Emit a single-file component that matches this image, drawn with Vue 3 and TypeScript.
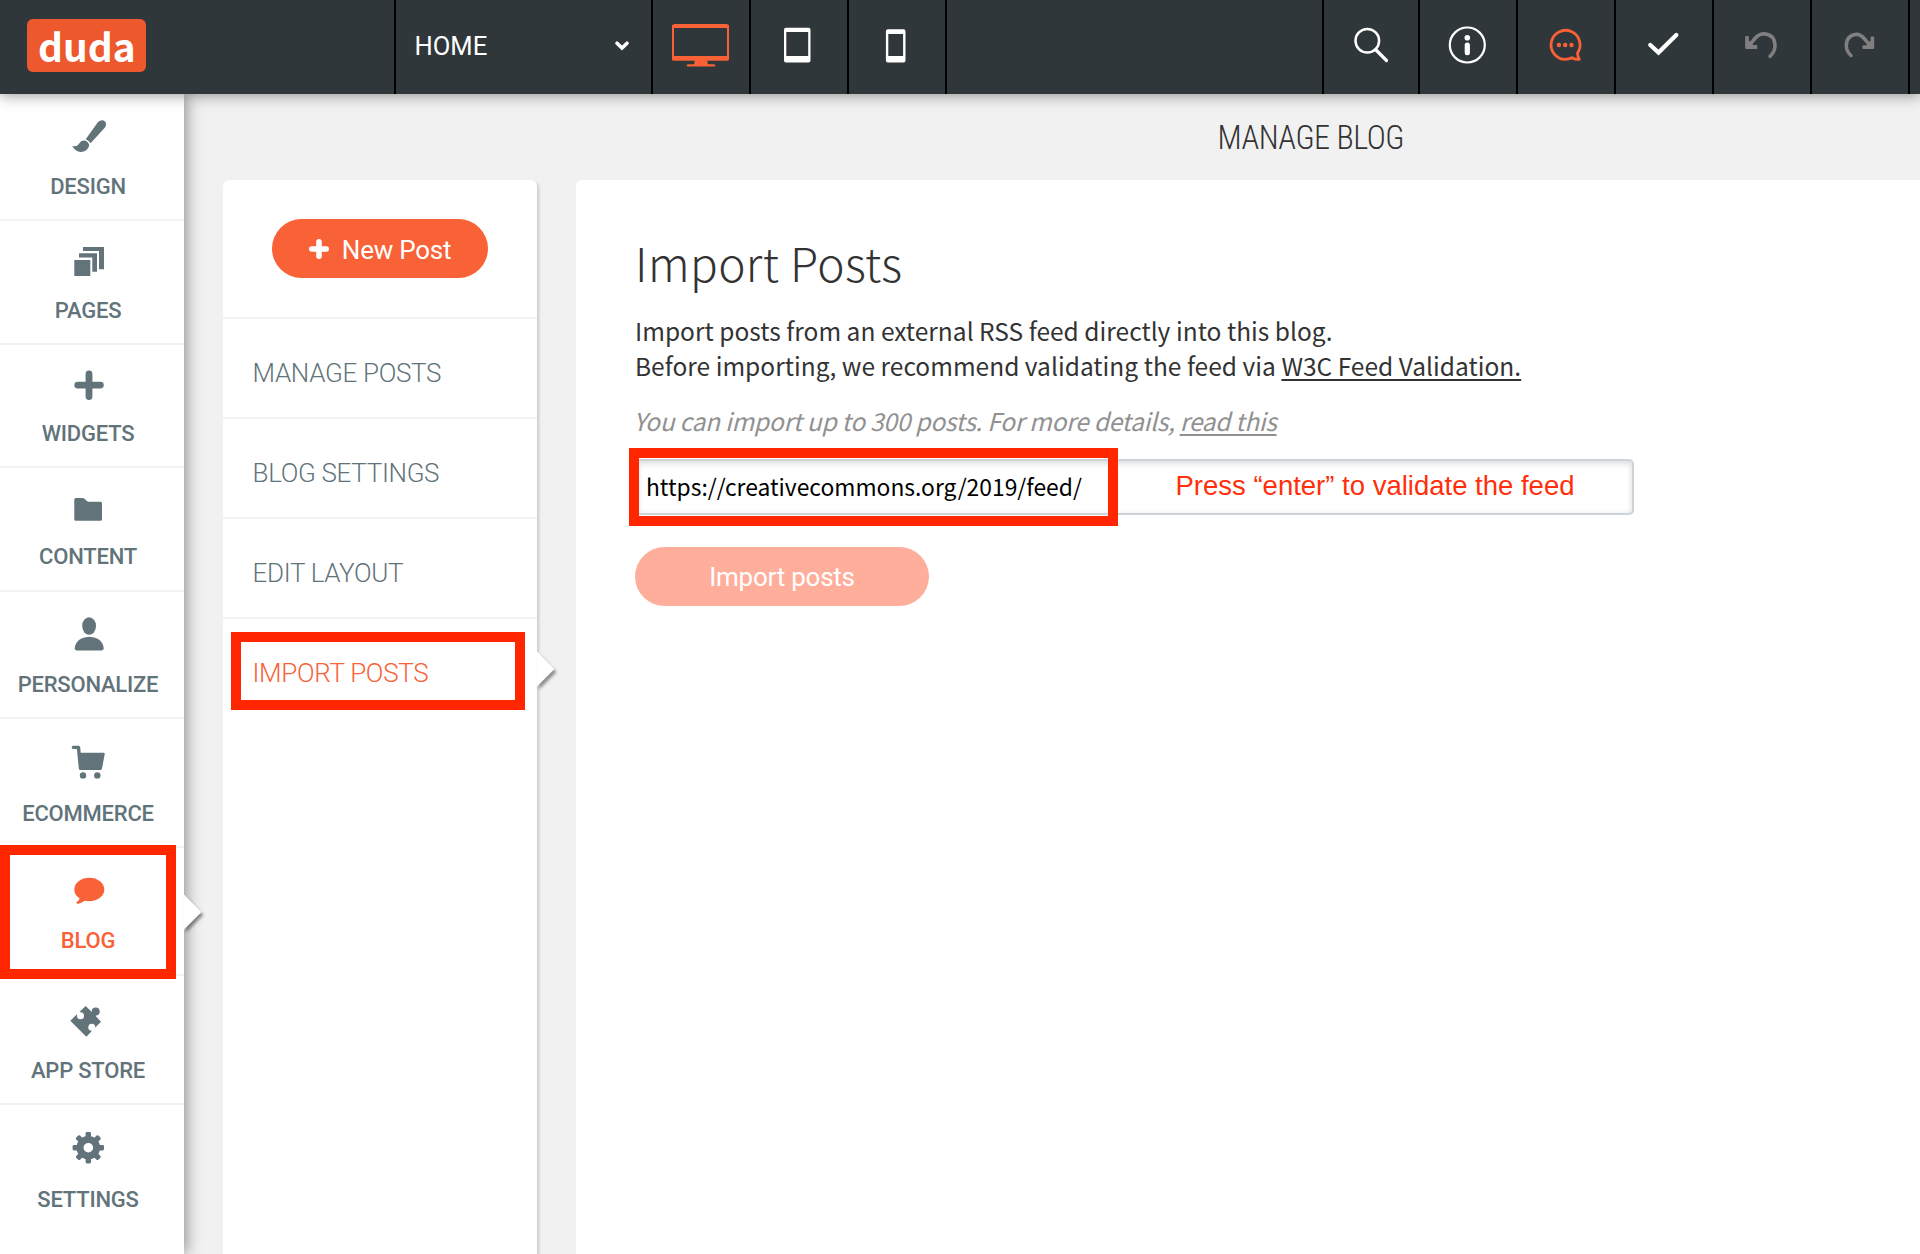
<script setup lang="ts">
import { ref } from 'vue'

interface NavItem {
  id: string
  label: string
  height: number
}

const navItems: NavItem[] = [
  { id: 'design', label: 'DESIGN', height: 127 },
  { id: 'pages', label: 'PAGES', height: 124 },
  { id: 'widgets', label: 'WIDGETS', height: 123 },
  { id: 'content', label: 'CONTENT', height: 124 },
  { id: 'personalize', label: 'PERSONALIZE', height: 127 },
  { id: 'ecommerce', label: 'ECOMMERCE', height: 129 },
  { id: 'blog', label: 'BLOG', height: 128 },
  { id: 'appstore', label: 'APP STORE', height: 129 },
  { id: 'settings', label: 'SETTINGS', height: 129 },
]

const blogMenu = ['MANAGE POSTS', 'BLOG SETTINGS', 'EDIT LAYOUT', 'IMPORT POSTS']
const gearTeeth = [0, 45, 90, 135, 180, 225, 270, 315]

const activeNav = ref('blog')
const activeMenu = ref('IMPORT POSTS')
const feedUrl = ref('https://creativecommons.org/2019/feed/')
</script>

<template>
  <div class="app">
    <header class="topbar">
      <div class="brand"><div class="logo"><span>duda</span></div></div>
      <div class="cell page-select">
        <span>HOME</span>
        <svg width="18" height="14" viewBox="0 0 18 14"><path d="M4 4.2l5 4.8 5-4.8" fill="none" stroke="#fff" stroke-width="3.6" stroke-linecap="round" /></svg>
      </div>
      <div class="cell device">
        <svg viewBox="0 0 96 94">
          <rect x="20" y="25" width="55" height="34.6" rx="2" fill="none" stroke="#f96137" stroke-width="2" />
          <path d="M19 25h57v3H19zM19 56h57v3.500q0 1-1 1H20q-1 0-1-1zM41.500 60h13v3q0 1.200 1.200 1.200H61q1.300 0 1.300 1.200T61 66.600H35q-1.300 0-1.300-1.200T35 64.200h5.300q1.200 0 1.200-1.200z" fill="#f96137" />
        </svg>
      </div>
      <div class="cell device">
        <svg viewBox="0 0 96 94"><path fill-rule="evenodd" d="M35 27.700h22.500q2 0 2 2V60.500q0 2-2 2H35q-2 0-2-2V29.700q0-2 2-2zM35.300 32v24H57.200V32z" fill="#fff" /></svg>
      </div>
      <div class="cell device">
        <svg viewBox="0 0 96 94"><path fill-rule="evenodd" d="M38.900 29.300H54.500q2 0 2 2V60.500q0 2-2 2H38.900q-2 0-2-2V31.300q0-2 2-2zM39.300 34v22H54.100V34z" fill="#fff" /></svg>
      </div>
      <div class="cell spacer"></div>
      <div class="cell tool first">
        <svg viewBox="0 0 96 94"><g fill="none" stroke="#fff"><circle cx="43.300" cy="40.700" r="11.800" stroke-width="2.500" /><path d="M51.500 49.500L62.500 60.500" stroke-width="3.200" stroke-linecap="round" /></g></svg>
      </div>
      <div class="cell tool">
        <svg viewBox="0 0 96 94"><circle cx="47.300" cy="45" r="17.500" fill="none" stroke="#fff" stroke-width="2.200" /><circle cx="47.300" cy="37.700" r="2.800" fill="#fff" /><rect x="44.700" y="42.500" width="5.200" height="12.800" rx="2.500" fill="#fff" /></svg>
      </div>
      <div class="cell tool">
        <svg viewBox="0 0 96 94">
          <path d="M59.500 53A14.500 14.500 0 1 0 47.200 59.300Q50.500 59.300 54 57.700Q57.500 59.800 61.300 59.400Q59.700 57 59.500 53z" fill="none" stroke="#f96137" stroke-width="2.800" stroke-linejoin="round" />
          <g fill="#f96137"><circle cx="40.900" cy="45" r="2.200" /><circle cx="47.200" cy="45" r="2.200" /><circle cx="53.500" cy="45" r="2.200" /></g>
        </svg>
      </div>
      <div class="cell tool">
        <svg viewBox="0 0 96 94"><path d="M34.300 45L42.500 52.500L60.300 35" fill="none" stroke="#fff" stroke-width="4.300" stroke-linecap="round" stroke-linejoin="miter" /></svg>
      </div>
      <div class="cell tool">
        <svg viewBox="0 0 96 94">
          <path d="M36 44.500L41.500 37.800Q45.500 33.800 50 33.800Q61 34.800 61 46Q60.800 52 56 56.300" fill="none" stroke="#808080" stroke-width="3.500" stroke-linecap="round" />
          <path d="M32.200 36h1.600q1 0 1 1v3.500l4.500 4.500h3q1 0 1 1v2q0 1-1 1H32.200q-1 0-1-1V37q0-1 1-1z" fill="#808080" />
        </svg>
      </div>
      <div class="cell tool">
        <svg viewBox="0 0 96 94">
          <path d="M57 44L51.500 37.800Q48 34.200 44.500 34.200Q34.300 35.200 34.300 46Q34.500 51.500 39 55.500" fill="none" stroke="#808080" stroke-width="3.500" stroke-linecap="round" />
          <path d="M61.200 36.500h-1.600q-1 0-1 1v3.300l-4.500 4.400h-2.700q-1 0-1 1v1.900q0 1 1 1h9.800q1 0 1-1V37.500q0-1-1-1z" fill="#808080" />
        </svg>
      </div>
      <div class="cell tail"></div>
    </header>

    <div class="body">
      <nav class="sidebar">
        <div
          v-for="item in navItems"
          :key="item.id"
          class="nav-item"
          :class="['nav-' + item.id, { active: item.id === activeNav }]"
          :style="{ height: item.height + 'px' }"
        >
          <svg class="nav-icon" width="40" height="40" viewBox="0 0 40 40" fill="currentColor">
            <g v-if="item.id === 'design'">
              <path d="M30 6Q34 2.800 37 5.500Q39.200 8 37 11.500L22.500 27.300Q20.500 24.500 17.700 23.300z" />
              <path d="M4.200 30Q9 31.200 11 27.800Q13 24 17 24.500Q21.300 26.300 21.200 29.800Q19.500 35.500 12.700 36Q7 35.500 4.200 30z" />
            </g>
            <path v-else-if="item.id === 'pages'" d="M6.300 20h16v16h-16zM11 13.300h18v18.400h-4.700V17.400H11zM15 7h21v22.300h-5V11H15z" />
            <path v-else-if="item.id === 'widgets'" d="M21 10.800v22.700M9.700 22.100h22.700" stroke="currentColor" stroke-width="6.800" stroke-linecap="round" />
            <path v-else-if="item.id === 'content'" d="M7.800 12h6.600q1.200 0 2.300 1l1.800 1.700q1 1 2.200 1h11.800q1.500 0 1.500 1.500V33.200q0 1.500-1.500 1.500H7.800q-1.500 0-1.500-1.500V13.500q0-1.500 1.500-1.500z" />
            <g v-else-if="item.id === 'personalize'">
              <ellipse cx="21.100" cy="12" rx="6.900" ry="8.700" />
              <path d="M6.700 34.300Q8 23.700 21.200 22.800Q34.500 23.700 35.700 34.300Q35.700 36.400 33.700 36.400H8.700Q6.700 36.400 6.700 34.300z" />
            </g>
            <g v-else-if="item.id === 'ecommerce'">
              <path d="M5.200 2.700H10.500Q12 2.700 12.200 4.200L12.700 9.700H35.500Q37 9.700 36.700 11.200L34 25.500Q33.700 27 32.200 27H12.500Q11 27 10.800 25.500L8.900 6H5.200Q3.700 6 3.700 4.300T5.200 2.700z" />
              <circle cx="15" cy="32.400" r="3.200" /><circle cx="29.300" cy="32.400" r="3.200" />
            </g>
            <g v-else-if="item.id === 'blog'">
              <ellipse cx="21.300" cy="19.500" rx="15" ry="11.800" />
              <path d="M12 27.500Q11.500 30.500 8.300 32.500Q8.300 34 10.500 33.700Q15 32.800 18 29.500z" />
            </g>
            <g v-else-if="item.id === 'appstore'">
              <path d="M17.700 6L24 12.300L30 18.500L33 21.800L18.300 36.700L2.300 20.700z" />
              <circle cx="27.700" cy="11.600" r="4" /><path d="M22.500 14.500L26 11L29 14L26.500 18z" />
              <g fill="#fff"><circle cx="12.500" cy="15.800" r="3.500" /><path d="M8.500 13.500L10.800 11.200L14 14L11 17z" /><circle cx="23.800" cy="27.300" r="3.500" /><path d="M23.500 31L27 27.500L29 29L25 33z" /></g>
            </g>
            <g v-else>
              <circle cx="20.300" cy="18.700" r="8.300" fill="none" stroke="currentColor" stroke-width="7" />
              <rect v-for="angle in gearTeeth" :key="angle" x="17.600" y="3" width="5.400" height="6" rx="1.300" :transform="`rotate(${angle} 20.300 18.700)`" />
            </g>
          </svg>
          <span class="nav-label">{{ item.label }}</span>
          <svg v-if="item.id === activeNav" class="pointer" width="24" height="46" viewBox="0 0 24 46"><path d="M-2 3.500L0 5.500L17.500 23L0 40.500L-2 42.500z" fill="#fff" /></svg>
          <div v-if="item.id === activeNav" class="highlight nav-highlight"></div>
        </div>
      </nav>

      <main class="workspace">
        <h1 class="page-title">MANAGE BLOG</h1>
        <div class="panels">
          <aside class="menu">
            <div class="menu-top">
              <button class="btn new-post">
                <svg width="20" height="20" viewBox="0 0 20 20"><path d="M10 2.800v14.400M2.800 10h14.400" stroke="#fff" stroke-width="5.600" stroke-linecap="round" /></svg>
                <span>New Post</span>
              </button>
            </div>
            <div v-for="entry in blogMenu" :key="entry" class="menu-item" :class="{ active: entry === activeMenu }">
              {{ entry }}
              <svg v-if="entry === activeMenu" class="pointer" width="24" height="46" viewBox="0 0 24 46"><path d="M-2 3.500L0 5.500L17.500 23L0 40.500L-2 42.500z" fill="#fff" /></svg>
              <div v-if="entry === activeMenu" class="highlight menu-highlight"></div>
            </div>
          </aside>

          <section class="panel">
            <h2>Import Posts</h2>
            <p class="intro">Import posts from an external RSS feed directly into this blog.<br />Before importing, we recommend validating the feed via <a>W3C Feed Validation.</a></p>
            <p class="note">You can import up to 300 posts. For more details, <a>read this</a></p>
            <div class="field">
              <span class="url">{{ feedUrl }}</span>
              <span class="hint">Press “enter” to validate the feed</span>
              <div class="highlight field-highlight"></div>
            </div>
            <button class="btn import">Import posts</button>
          </section>
        </div>
      </main>
    </div>
  </div>
</template>

<style>
body {
  margin: 0;
  overflow: hidden;
}
</style>

<style scoped>
.app {
  width: 1920px;
  height: 1254px;
  display: flex;
  flex-direction: column;
  overflow: hidden;
  background: #f1f1f1;
  font-family: Roboto, sans-serif;
}
.app * {
  box-sizing: border-box;
}

/* Top bar */
.topbar {
  position: relative;
  z-index: 3;
  flex: none;
  display: flex;
  height: 94px;
  background: #30373a;
  box-shadow: 0 2px 13px rgba(0, 0, 0, 0.38);
}
.brand {
  width: 394px;
  padding: 19px 0 0 26.500px;
}
.logo {
  width: 119.500px;
  height: 53px;
  border-radius: 6px;
  background: #ed592c;
  color: #fff;
  font: 700 38.800px/53px 'Noto Sans CJK SC', sans-serif;
  padding-left: 11.500px;
}
.cell {
  height: 94px;
  border-left: 2px solid #000;
}
.cell > svg {
  display: block;
}
.page-select {
  width: 257px;
  display: flex;
  align-items: center;
  justify-content: space-between;
  padding: 0 20px 2px 18.500px;
  color: #fff;
  font-size: 25.600px;
}
.device,
.tool {
  width: 98px;
}
.device > svg,
.tool > svg {
  width: 96px;
  height: 94px;
}
.tool.first {
  width: 96px;
  overflow: hidden;
}
.spacer {
  width: 377px;
}
.tail {
  flex: 1;
}

.body {
  flex: 1;
  display: flex;
  min-height: 0;
}

/* Sidebar */
.sidebar {
  position: relative;
  z-index: 2;
  flex: none;
  width: 184px;
  background: #fff;
  box-shadow: 2px 0 15px rgba(0, 0, 0, 0.42);
}
.nav-item {
  position: relative;
  display: flex;
  flex-direction: column;
  align-items: center;
  justify-content: flex-end;
  padding: 0 8px 19px 0;
  border-bottom: 2px solid #f1f2f3;
  color: #62737a;
}
.nav-item.nav-content,
.nav-item.nav-blog {
  padding-bottom: 20px;
}
.nav-item.active {
  color: #f96137;
}
.nav-item.nav-settings {
  border-bottom: 0;
  padding-bottom: 21px;
}
.nav-icon {
  margin-bottom: 18px;
}
.nav-label {
  font-size: 22px;
  line-height: 26px;
  font-weight: 500;
  letter-spacing: -0.22px;
}
.pointer {
  position: absolute;
  left: 100%;
  filter: drop-shadow(2px 3px 1.500px rgba(0, 0, 0, 0.42));
}
.nav-item .pointer {
  top: 40.500px;
}
.highlight {
  position: absolute;
  border: 10px solid #ff2600;
}
.nav-highlight {
  left: 0;
  top: -3.500px;
  width: 176px;
  height: 134px;
}

/* Workspace */
.workspace {
  flex: 1;
  display: flex;
  flex-direction: column;
  min-width: 0;
}
.page-title {
  margin: 0;
  height: 86px;
  padding: 1px 0 0 1033.500px;
  font: 300 32.300px/86px 'Roboto Condensed', Roboto, sans-serif;
  letter-spacing: -0.500px;
  color: #333;
}
.panels {
  flex: 1;
  display: flex;
  gap: 39px;
  padding-left: 39px;
}
.menu {
  width: 314px;
  background: #fff;
  border-radius: 6px 6px 0 0;
  box-shadow: 2px 2px 3px rgba(0, 0, 0, 0.16);
}
.menu-top {
  height: 139px;
  padding: 39px 0 0 49px;
  border-bottom: 2px solid #f1f2f3;
}
.btn {
  display: flex;
  align-items: center;
  justify-content: center;
  height: 59px;
  padding: 0;
  border: 0;
  border-radius: 30px;
  color: #fff;
  font-family: Roboto, sans-serif;
  font-size: 26px;
}
.new-post {
  width: 216px;
  gap: 13px;
  background: #f96137;
  letter-spacing: -0.250px;
}
.new-post span {
  padding-top: 2px;
}
.menu-item {
  position: relative;
  height: 100px;
  padding: 10px 0 0 29.500px;
  border-bottom: 2px solid #f1f2f3;
  color: #62737a;
  font-size: 26px;
  line-height: 88px;
  font-weight: 300;
  letter-spacing: -0.320px;
}
.menu-item.active {
  border-bottom: 0;
  color: #f96137;
}
.menu-item .pointer {
  top: 26.500px;
}
.menu-highlight {
  left: 8px;
  top: 13px;
  width: 294px;
  height: 78px;
}
.panel {
  flex: 1;
  padding: 54px 0 0 59px;
  background: #fff;
  border-radius: 6px 0 0 0;
}
h2 {
  margin: 0 0 23px;
  font: 300 46px/56px 'Noto Sans CJK SC', sans-serif;
  letter-spacing: 0.400px;
  color: #333;
}
p {
  margin: 0;
  font-family: 'Noto Sans CJK SC', sans-serif;
  font-size: 24.500px;
  white-space: nowrap;
}
a {
  text-decoration: underline;
  text-decoration-thickness: 2px;
  text-underline-offset: 3px;
}
.intro {
  line-height: 35px;
  letter-spacing: 0.020px;
  color: #333;
}
.note {
  margin: 20px 0 0 -1.500px;
  line-height: 36px;
  font-style: italic;
  letter-spacing: -0.260px;
  color: #919191;
}
.field {
  position: relative;
  display: flex;
  width: 999px;
  height: 56px;
  margin-top: 20px;
  padding-left: 9px;
  border: 2px solid #cdd3d7;
  border-radius: 5px;
  box-shadow: inset 0 2px 6px rgba(0, 0, 0, 0.16);
}
.url {
  width: 529.500px;
  color: #000;
  font: 400 22.850px/50px 'Noto Sans CJK SC', sans-serif;
}
.hint {
  color: #ff2f0c;
  font: 400 27.500px/49px 'Liberation Sans', sans-serif;
  white-space: nowrap;
}
.field-highlight {
  left: -8px;
  top: -13px;
  width: 489px;
  height: 78px;
}
.import {
  width: 294px;
  margin-top: 32px;
  background: #ffae9c;
  letter-spacing: -0.250px;
}
</style>
